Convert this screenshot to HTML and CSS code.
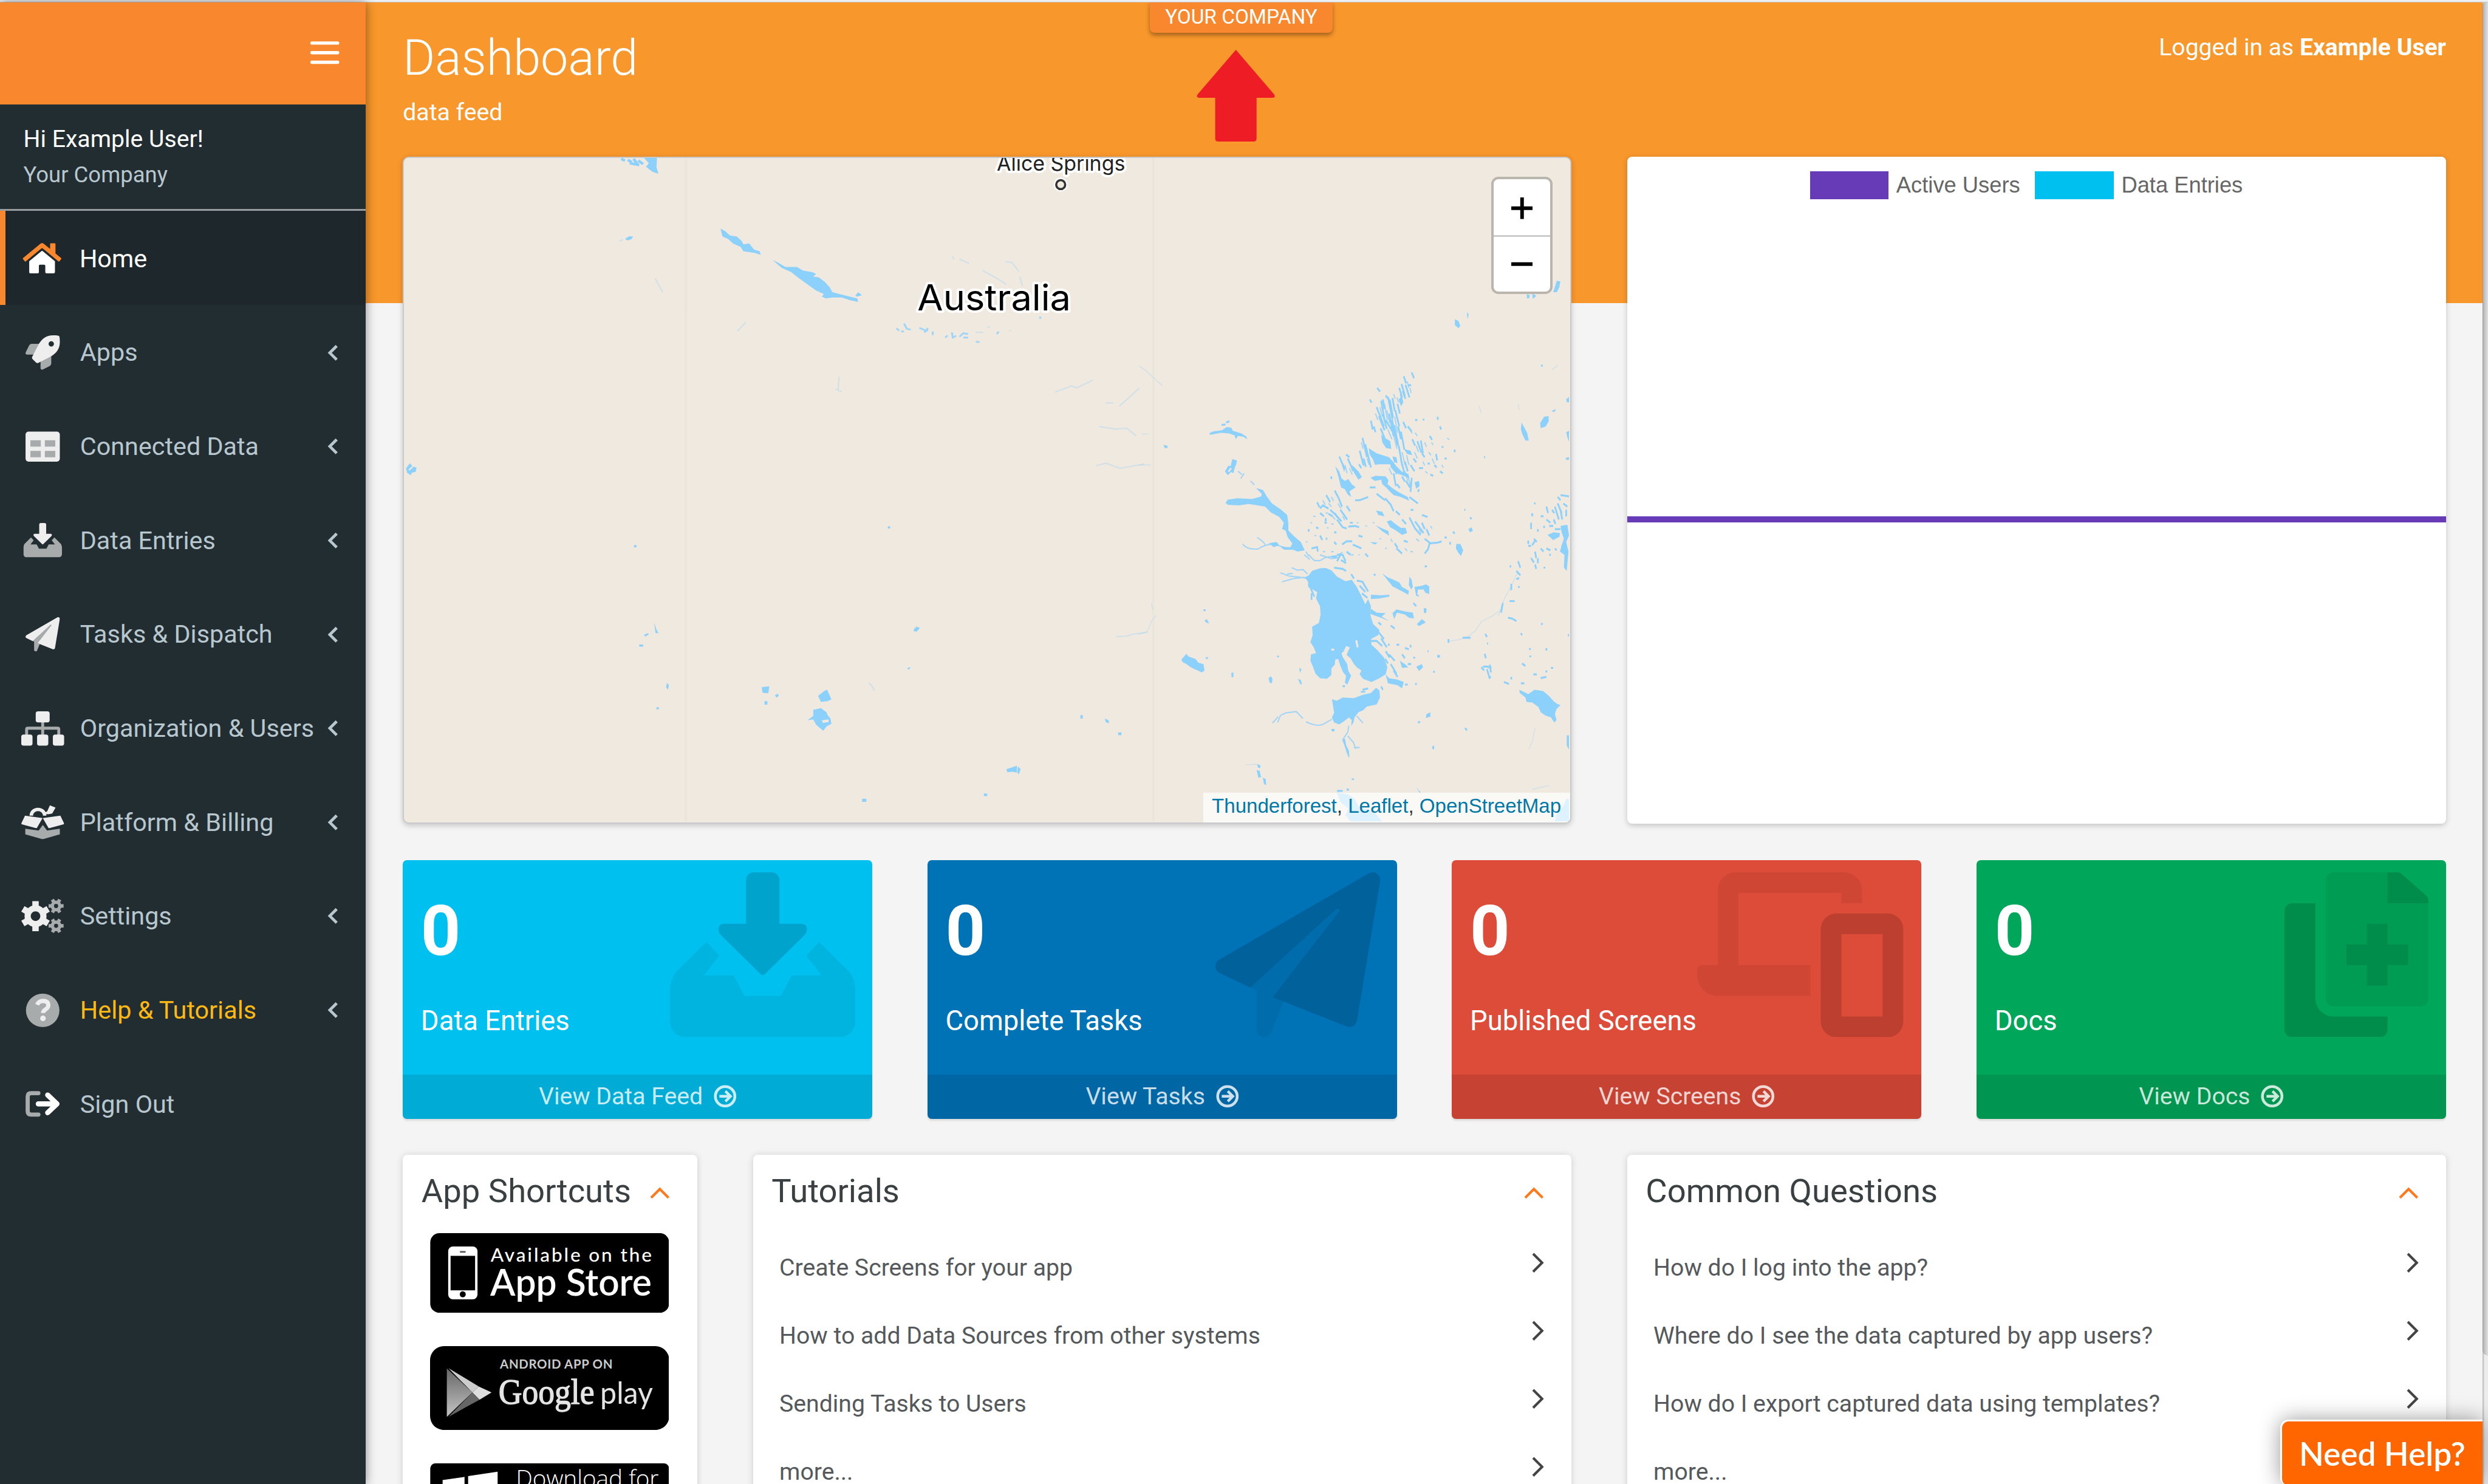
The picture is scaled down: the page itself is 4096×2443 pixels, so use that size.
FILE: index.html
```html
<!DOCTYPE html>
<html lang="en">
<head>
<meta charset="utf-8">
<title>Dashboard</title>
<link rel="stylesheet" href="styles.css">
</head>
<body>
<svg class="defs" aria-hidden="true">
  <symbol id="circle-right" viewBox="0 0 38 38"><circle cx="19" cy="19" r="16.3" fill="none" stroke="currentColor" stroke-width="4.6"/><path d="M9.500 19H27M19.500 10.500L28 19l-8.500 8.500" fill="none" stroke="currentColor" stroke-width="4.400"/></symbol>
  <symbol id="angle-left" viewBox="0 0 18 28"><path d="M15.500 2.500L4 14l11.500 11.500" fill="none" stroke="currentColor" stroke-width="4.800"/></symbol>
  <symbol id="angle-right" viewBox="0 0 20 34"><path d="M2 2l15 15L2 32" fill="none" stroke="currentColor" stroke-width="4.200"/></symbol>
  <symbol id="angle-up" viewBox="0 0 33 20"><path d="M2 18L16.500 3.500 31 18" fill="none" stroke="currentColor" stroke-width="4.200"/></symbol>
  <symbol id="inbox-in" viewBox="0 0 576 512"><path class="lo" d="M113 216L153 259L105 320H198L232 384H344L378 320H471L423 259L463 216L560 312Q576 338 576 364V464a48 48 0 0 1-48 48H48a48 48 0 0 1-48-48V364Q0 338 16 312Z"/><path class="hi" d="M167 160H236V24a24 24 0 0 1 24-24h56a24 24 0 0 1 24 24v136h69c17.800 0 21 21 10 34L296 315c-5 5-11 5-16 0L157 194c-11-13-8-34 10-34z"/></symbol>
  <symbol id="plane" viewBox="0 0 512 512"><path class="lo" d="M108 358L375 113.700C382 107 390 115 384 122L178 388L212 401L170.500 503.300c-14 17.100-42.500 7.800-42.500-15.800V366z"/><path class="hi" d="M511.600 28l-72 432a24 24 0 0 1-33 18.200L178 388 384 122c4.700-5.700-1-12-8.600-8.300L108 358 14.700 313.800a24 24 0 0 1-2.200-43.200L476 3.200c17.300-10 39 4.600 35.600 24.800z"/></symbol>
</svg>
<div class="app">
  <div class="strip"></div>
  <aside class="sidebar">
    <div class="logo"><svg class="burger" viewBox="0 0 48 40"><path d="M2.500 4H45.500M2.500 20H45.500M2.500 36H45.500" stroke="#fff" stroke-width="5.400" stroke-linecap="round"/></svg></div>
    <div class="user"><div class="user-name">Hi Example User!</div><div class="user-org">Your Company</div></div>
    <nav class="menu">
      <a class="item active"><svg class="ico" viewBox="-32 0 640 512"><path fill="#fff" d="M280.400 148.300L96 300.100V464a16 16 0 0 0 16 16H224a16 16 0 0 0 16-16V368a16 16 0 0 1 16-16h64a16 16 0 0 1 16 16v95.600a16 16 0 0 0 16 16H464a16 16 0 0 0 16-16V300L295.700 148.300a12.200 12.200 0 0 0-15.300 0z"/><path fill="#f9872d" d="M571.600 251.500L488 182.600V44a12 12 0 0 0-12-12h-56a12 12 0 0 0-12 12v72.600L318.500 43a48 48 0 0 0-61 0L4.300 251.500a12 12 0 0 0-1.600 16.900l25.500 31A12 12 0 0 0 45.200 301l235.200-193.700a12.200 12.200 0 0 1 15.300 0L530.900 301a12 12 0 0 0 16.900-1.600l25.500-31a12 12 0 0 0-1.700-16.900z"/></svg><span>Home</span></a>
      <a class="item"><svg class="ico" viewBox="-64 0 640 512"><g class="lo"><path d="M199 128H94.800c-16.300 0-35.500 11.900-42.900 26.500L2.500 253.300A28 28 0 0 0 0 264a24 24 0 0 0 24 24H140z"/><path d="M384 312.800V417.200c0 16.300-11.900 35.500-26.500 42.800l-98.800 49.400A28 28 0 0 1 248 512a24 24 0 0 1-24-24V372z"/></g><path class="hi" fill-rule="evenodd" d="M505.100 19.100C504 13.600 498.500 8.100 492.900 6.900 460.700 0 435.500 0 410.400 0 307.200 0 245.300 55.200 199 128L105.300 310.500c-11.400 11.400-13 32.300 0 45.200L156.200 406.600c11.200 11.200 32.200 13.200 45.300 0L384 312.800c72.600-46.300 128-108.400 128-211.100 0-25.200 0-50.400-6.900-82.600ZM384 168a40 40 0 1 1 40-40 40 40 0 0 1-40 40z"/></svg><span>Apps</span><svg class="ang"><use href="#angle-left"/></svg></a>
      <a class="item"><svg class="ico" viewBox="-64 0 640 512"><rect class="hi" y="32" width="512" height="448" rx="44"/><path class="lo" d="M72 160H228V256H72zM288 160H444V256H288zM72 320H228V416H72zM288 320H444V416H288z"/></svg><span>Connected Data</span><svg class="ang"><use href="#angle-left"/></svg></a>
      <a class="item"><svg class="ico" viewBox="-32 0 640 512"><use href="#inbox-in" width="576" height="512"/></svg><span>Data Entries</span><svg class="ang"><use href="#angle-left"/></svg></a>
      <a class="item"><svg class="ico" viewBox="-64 0 640 512"><use href="#plane" width="512" height="512"/></svg><span>Tasks &amp; Dispatch</span><svg class="ang"><use href="#angle-left"/></svg></a>
      <a class="item"><svg class="ico" viewBox="0 0 640 512"><path d="M80 360V270Q80 252 98 252H542Q560 252 560 270V360M320 160V360" fill="none" stroke="#a8abac" stroke-width="44"/><g class="hi"><rect x="216" width="208" height="166" rx="34"/><rect y="346" width="168" height="166" rx="34"/><rect x="236" y="346" width="168" height="166" rx="34"/><rect x="472" y="346" width="168" height="166" rx="34"/></g></svg><span>Organization &amp; Users</span><svg class="ang"><use href="#angle-left"/></svg></a>
      <a class="item"><svg class="ico" viewBox="0 0 640 512"><path d="M150 160a100 92 0 0 1 200 0" fill="none" stroke="#eee" stroke-width="52"/><path class="hi" d="M428 6L512 40L462 130L400 140L330 130L388 96z"/><path class="lo" d="M60 356L260 384L322 300L384 384L576 356V440L340 508Q320 514 300 508L60 440Z"/><path class="hi" d="M56 160L318 198L236 340Q230 350 218 347L8 290Q-4 284 4 270zM584 160L322 198L404 340Q410 350 422 347L632 290Q644 284 636 270z"/></svg><span>Platform &amp; Billing</span><svg class="ang"><use href="#angle-left"/></svg></a>
      <a class="item"><svg class="ico" viewBox="0 0 640 512"><g fill="none" stroke="#eee"><circle cx="213" cy="256" r="118" stroke-width="92"/><path d="M213 110V32M213 402V480M86 183L24 147M340 183L402 147M86 329L24 365M340 329L402 365" stroke-width="96" stroke-linejoin="round"/></g><g fill="none" stroke="#a8abac"><circle cx="520" cy="104" r="56" stroke-width="50"/><path d="M450 104H408M590 104H632M485 43L465 8M555 43L575 8M485 165L465 200M555 165L575 200" stroke-width="52"/><circle cx="520" cy="400" r="56" stroke-width="50"/><path d="M450 400H408M590 400H632M485 339L465 304M555 339L575 304M485 461L465 496M555 461L575 496" stroke-width="52"/></g></svg><span>Settings</span><svg class="ang"><use href="#angle-left"/></svg></a>
      <a class="item help"><svg class="ico" viewBox="-64 0 640 512"><circle class="lo" cx="256" cy="256" r="250"/><path d="M172 172Q200 116 262 116Q340 118 340 182Q340 216 300 242Q262 262 260 296" fill="none" stroke="#eee" stroke-width="62" stroke-linecap="butt"/><circle cx="260" cy="376" r="42" fill="#eee"/></svg><span>Help &amp; Tutorials</span><svg class="ang"><use href="#angle-left"/></svg></a>
      <a class="item"><svg class="ico" viewBox="-64 0 640 512"><path d="M192 96H84Q32 96 32 148V364Q32 416 84 416H192" fill="none" stroke="#a8abac" stroke-width="62" stroke-linecap="round"/><path d="M190 256H440M330 124L470 256L330 388" fill="none" stroke="#fff" stroke-width="76" stroke-linecap="round" stroke-linejoin="round"/></svg><span>Sign Out</span></a>
    </nav>
  </aside>
  <main class="main">
    <div class="tag">YOUR COMPANY</div>
    <svg class="arrow" viewBox="0 0 133 156"><path d="M66.500 2L130 76Q134 82 127 82H101V150Q101 155 96 155H37Q32 155 32 150V82H6Q-1 82 3 76Z" fill="#ee1c25"/></svg>
    <header class="head"><div><h1>Dashboard</h1><p class="sub">data feed</p></div><p class="login">Logged in as <b>Example User</b></p></header>
    <section class="top">
      <div class="map">
        <svg class="map-art" viewBox="674 263 1943 1107">
          <path d="M1144 263V1370M1924 263V1370" stroke="#e8e5dd" stroke-width="3"/>
          <g class="water" transform="translate(660 250) scale(.79719 .72704)">
            <path d="M520 18H547L546 40L550 54L538 50L524 38L530 30z"/><path d="M472 20l8 4M486 22l8 6M498 20l8 12M508 24l10 8M490 30l20 4" class="st"/>
            <path d="M680 180L690 186L700 196L714 198L724 208L728 216L740 214L750 228L762 232L764 240L752 236L740 234L728 232L722 222L706 214L696 204L684 198z"/>
            <path d="M789 252L800 258L816 268L840 268L852 276L872 280L880 284L874 290L886 292L898 302L908 314L914 326L936 332L966 340L968 348L950 344L934 338L914 338L900 340L892 336L896 330L880 322L862 308L842 292L828 280L808 270z"/>
            <path d="M962 334L968 326L976 333L966 336zM480 204L488 198L497 198L494 204L486 207z"/>
            <path d="M1048 409l6 5M1064 398l6 12 8 2M1058 416h6M1096 408l14 6 4-6M1106 418l8-6M1124 416v8M1150 430l5-5M1164 418l2 12 7-4M1180 428l8-8 10 2M1188 430h10M1214 440h8M1258 422l4-6M1349 382v5" class="st thin"/>
            <path d="M468 209l8-4M543 294l8 16 8 16M1214 418h16M1238 406h6M1284 414h4M1165 243l4 8M1180 250l20 10M1228 276l30 18 20 14M1276 256l14 2 14 20M1306 290l6 22M1380 555l34-14 12 4 34-18M1486 580h16M1514 588l18-18 24-24M1472 634l34 6 24-2 20 18M1466 724l20-6 30 12 50-10M1508 1116l22-1 14-5 30-4M928 520l-2 30M920 548l14 6M715 415l18-20" class="st fa"/>
            <path d="M22 730L30 718L36 726L44 728L42 738L34 740L32 746L24 740z"/><path d="M28 734l8-8" stroke="#f0e9df" stroke-width="3"/>
            <path d="M541 1084L546 1100L550 1108L544 1108zM520 1112l8-4 2 3-8 5zM510 1134h8v5h-8zM568 1222l4 6-2 10-4-6zM1084 1100L1090 1093L1097 1096L1091 1104L1085 1104zM1030 863h5v5h-5zM499 906h5v5h-5zM546 1278h5v5h-5z"/>
            <path d="M766 1232L782 1230L780 1246L768 1245zM772 1264h6v8h-6zM794 1250l6-3 2 5-5 4zM884 1252L898 1240L903 1238L912 1260L904 1264L890 1266z"/>
            <path d="M874 1284L890 1280L902 1290L904 1296L910 1304L912 1316L902 1322L895 1332L886 1324L880 1318L874 1306L862 1308L874 1298z"/><path d="M892 1308l14-2v6l-12 2z" fill="#f0e9df"/>
            <path d="M1278 1420L1290 1416L1300 1412L1300 1428L1290 1426L1280 1427zM1302 1414l6 6-4 12-3-4zM1484 1304L1492 1308L1493 1315L1486 1312zM1512 1336h7v6h-7zM1433 1296h5v8h-5zM1231 1476h7v6h-7zM976 1488h9v7h-9zM1070 1188l8-2-4 6z"/><path d="M990 1222l6 6 6 12" class="st fa"/>
          </g>
          <path class="water" d="M2597 468l6 1-2 10-4 8-6 0zM2547 490l5 2-1 5-4 0zM2556 489l7 4-6 5zM2427 532l6 3 3 8-3 4-6-5zM2447 520l3 4-2 8z"/>
          <g class="water" transform="translate(1900 550) scale(.47194 .53571)">
            <path d="M0 112l24 14 34 28 26 20M10 324h24M0 420h42M0 948l30-10 16-34 16-16M44 850l4 20M1090 970l40-6 30-8 30-20 20-28 40-18 24-16M1270 890l20-50 30-50 20-40M1400 1240l-10 40-12 26M1390 1430l60-12M1202 236l8 22M1480 110l-20 14M376 1354l40-2 10 4M1340 230l4 20" class="st fa"/>
            <path d="M248 322L262 316L294 312L310 302L326 304L332 314L362 322L380 332L382 340L368 332L350 330L342 340L338 328L318 322L290 320L252 326z"/><path d="M292 296l14-2M308 288l12-4" class="st"/>
            <path d="M304 440L316 422L324 424L330 402L346 406L344 418L338 430L334 446L326 442L314 452zM86 358L100 360L102 367L92 368z"/><path d="M316 442l10-12" stroke="#f0e9df" stroke-width="5"/>
            <path d="M350 440l14 10M360 462l12-16M394 470l14 12" class="st thin"/>
            <path d="M414 492L438 498L452 518L470 540L500 558L524 576L528 602L528 624L548 642L572 660L586 686L560 690L534 680L542 664L526 646L518 624L506 620L512 600L496 582L466 568L446 550L420 546L388 542L352 546L314 544L306 538L314 528L346 524L400 526L432 518L434 510z"/>
            <path d="M366 666Q380 684 420 682Q444 668 476 666Q500 674 540 682M418 646q20 10 30 24" class="st thin"/><path d="M460 664l26-4 10 10-20 6zM500 676l44 0 10 8-40 0z"/>
            <path d="M584 700l20 14M600 700l20 18h20l20-10 40-6 20-10M590 690l10 14M500 756l30 10 40 4 30 4M506 784l40-10 40-4M540 740l20 8 20-2 16 14M524 760l20-2M640 700l40 12 30-4" class="st thin"/>
            <path d="M586 770L600 764L612 750L640 742L660 741L680 748L700 768L730 782L752 778L770 800L786 828L800 854L810 838L820 860L818 888L828 916L850 934L846 950L820 962L822 980L842 996L866 1020L878 1050L872 1072L850 1084L822 1096L792 1086L780 1072L786 1060L770 1050L760 1040L748 1022L734 1012L740 998L746 988L732 984L724 1000L716 1006L720 1018L736 1040L740 1062L750 1076L736 1104L728 1098L732 1076L722 1066L712 1046L704 1024L694 1026L692 1042L680 1054L680 1074L664 1086L640 1084L624 1070L614 1046L606 1030L608 1010L626 1006L618 988L606 972L614 950L612 924L636 912L642 886L640 860L626 836L630 816L610 806L598 800L598 784z"/>
            <path d="M768 966l5 22" stroke="#f0e9df" stroke-width="7"/><path d="M680 995h10" stroke="#f0e9df" stroke-width="6"/>
            <path d="M682 1150L700 1154L720 1144L760 1146L790 1136L820 1130L838 1114L850 1122L852 1144L840 1166L806 1172L792 1184L776 1190L762 1206L758 1222L750 1232L752 1214L742 1206L722 1220L708 1228L690 1222L682 1206L690 1192z"/>
            <path d="M472 1224l20-20M490 1222l10-22 20-8 36-4 24 22M590 1220q40 16 60 8l32-16M742 1232l-4 20-18 24 16 30 6 24M738 1264l20 20 8 20M760 1300h20M770 1202l22 22" class="st thin"/><path d="M720 1276l8-4 4 20 10 18 2 18-8-8zM680 1242l12 0-2 8-8 0z"/>
            <path d="M150 1026L168 1008L174 1016L200 1024L210 1036L228 1040L232 1060L222 1066L208 1060L196 1056L180 1048L168 1040L154 1034zM234 1020l12-2-6 8zM232 904l8-4 8 14-12-4zM326 1068l8-2v14l-6 2zM458 1084l8-6 6 8-2 14-8-2zM566 1052l8 4-4 12zM562 1086l10 4 4 14-6-2zM488 1014h7v5h-7zM228 870h8v5h-8z"/>
            <path d="M418 1352l12 4-2 8-8-2zM416 1370l10 2 6 20-10 2zM438 1394l10 4 2 18-8-2zM752 1396h8v5h-8zM700 1432h20v6h-20zM734 1428h8v6h-8zM446 1450h8v5h-8z"/>
            <path d="M700 1440L740 1446L764 1462L776 1484L830 1500L862 1532H750L730 1510L740 1490L712 1470z"/><path d="M980 1424l14 14 2 8z"/>
            <!-- channel country -->
            <path d="M812 368L840 384L884 396L898 410L910 424L928 440L952 448L956 462L930 452L908 446L890 428L888 418L850 418L834 420L828 404L816 388z"/>
            <path d="M818 460L836 454L872 456L882 468L878 480L896 492L916 504L950 520L956 532L926 520L900 514L884 500L876 492L860 480L856 466L834 470z"/>
            <path d="M694 424L708 440L716 462L728 470L740 464L752 480L766 490L744 502L750 520L738 512L728 496L714 490L706 460zM752 420L776 440L788 458L776 466L760 444z"/>
            <path d="M856 326L870 336L888 346L892 370L874 368L860 350zM936 370L960 376L966 390L948 386zM896 394L910 396L914 414L902 412zM974 474L990 470L992 486L980 494zM918 216l12-10 4 20-8 12z"/>
            <path d="M876 596L890 592L906 604L926 616L942 616L948 632L930 638L908 624L888 614zM838 562L860 566L868 580L846 576zM836 608L860 618L882 626L884 640L862 628zM816 660l28 2-10 6z"/>
            <path d="M860 758L880 770L920 786L930 800L954 812L952 824L926 812L896 798zM956 768l8 10 4 22-6 8-8-14zM974 800L1000 796L1014 792L1026 798L1026 822L1012 818L1006 808L986 808L984 822L992 830L980 828z"/>
            <path d="M820 824L856 826L884 824L886 830L850 836L820 838zM820 868L840 880L872 882L858 892L884 906L850 894L818 884zM896 882L910 870L940 876L968 880L972 898L954 896L940 886L912 880L902 900zM982 916L1000 900L1014 910L990 922zM1006 866l10 0 0 14-8 2z"/>
            <path d="M872 1072L884 1084L912 1088L936 1096L930 1116L914 1106L880 1100zM922 1030L940 1040L952 1050L930 1052zM980 1048l20-8 4 10-14 12zM848 1100l20-8M1054 1012h10v8h-10zM784 1124h16v5h-16z"/>
            <path d="M842 180l10 12M964 132l8 18M936 144l8 22M928 168l12 36M942 170l14 40M920 180l10 30M932 190l10 24M952 172h10M856 220l12 60M862 216l6 30M880 208l16 70M886 216l12 56M896 212l8 40M872 204l12 14M840 240l26 60M848 268l20 44M862 262l14 46M872 280l24 36M884 260l16 70M894 280l20 80M902 296l14 60M906 250l14 50M914 230l8 30M926 316l12 56M918 360l12 60M916 300l10 40M816 216l6 10M820 282l6 28M830 300l6 18M854 306l14 30M790 336l16 60M800 356l20 72M780 376l14 46M794 400l8 26M708 394l20 40M738 400l20 40M732 388l12 8M778 418l8 12M950 300l14 16M934 286l10 20M966 340l10 20M984 346l14 36M996 344l8 40M1000 384l10 12M970 400l10 12M960 420l14 20M940 410l10 30M926 404l12 40M990 430h14M964 460l-4 44M944 470l14 20M930 456l10 16M900 446l8 40M912 480l10 12M1006 276l0 6M1028 330l8 12M1056 270v10M1050 386l4 20M1044 420l8 8M1064 440l10 6M1030 450l10 4M1080 400h8M1116 372v8M1070 364h6M1020 416h8M990 496l-4 8M976 280h8M1064 300l4 10" class="st"/>
            <path d="M948 160l6 20M958 180l4 16M924 200l4 16M868 230l10 50M876 250l10 40M852 240l8 30M888 240l12 60M904 270l10 50M880 310l14 30M898 320l14 50M910 330l10 40M930 380l10 40M946 390l8 30M900 420l10 30M884 430l10 20M940 440l10 30M950 450l10 40M974 380l10 20M980 360l8 20M1010 350l6 14M1024 380l8 10M1036 400l8 16M1004 410l6 12M1012 440l8 6M1034 350l6 8M976 320l8 10M960 312l6 10M1090 336l6 6M1070 420l6 8M900 200l6 14M912 210l6 16M836 260l8 20M716 410l10 30M728 420l8 26M744 430l10 20M764 440l10 14M720 470l12 24M786 350l6 20M806 400l8 20" class="st thin"/>
            <path d="M692 500l14 24 12 26M662 514l14 22M630 536l8 16M676 560l20 16 20 20M640 570l14 10M712 560l24 30M764 530h16M734 548l12 16M700 590l20 24 14 4M740 612l24-2 14 4M656 600h8M626 614l8 4M600 620v8M640 640l8 14M610 680l20-4 2 14M718 668l16-10 20 0M756 668l30 12M776 640l14 4M800 696l10 10M700 700l20 0 10 20M714 716l18 10M734 690l14 10M690 660l8 8M660 650h6M690 630h8M870 524l20 20 10 20M908 564l14 12M930 590l14 14M956 584l20 34 20 20M976 596l30 36M1000 600l10 20M1016 620l10 20M1010 650l20 14 26-2 14-4M1028 662l-6 20-12 14M904 664l10 14M910 680l20 16M936 656l14 4M960 560h10M956 520l30 20M816 490h20M780 530l30-10M840 510l30 20M1010 736h8M1100 660v8M1110 628l6 6M1080 646h8M680 456v8M1000 576l20 6" class="st"/>
            <path d="M650 530l8 14M670 540l10 10M684 580l10 10M660 570h8M720 580l8 12M680 520l8 12M704 540l10 16M616 580h8M606 600h6M620 640h6M664 616h6M680 604h8M770 600h6M800 610h6M826 600h6M890 650l6 10M850 650h6M870 680h6M940 680l8 8M960 690h8M980 650l10 8M990 620l8 12M1030 610l6 8M590 660h6M650 690h8M680 690h8M750 700h8M776 700h4" class="st thin"/>
            <path d="M640 556l10-10 20 10M670 572l14 8M692 570l10 14M746 600h10M660 586v10M690 740l30 4 12 6M680 706h20M700 720l12-20M750 760l10 14M770 780l20 4 20 30M780 796l20 20M788 820l20 14M830 760l6 4M846 940l20 22M856 960l20 28M872 1000l14 20M884 1010l20 20M890 1040l20 30M900 1060l14 20M870 1024l10 14M846 910l10 8M890 920l14 10M820 968h20l20 16M880 980h6M910 980h10M940 990l14 4M960 980v8M970 1020h6M950 1040h12M930 1010l10 12M940 1104h10M976 1102h6M970 850l10 10M856 1110l6 10M790 1120l20-4M1020 1000h4M1040 1064h6M610 820v20M600 790l20 40" class="st"/>
            <path d="M1122 666L1136 666L1146 686L1138 704L1128 692L1120 680zM1164 620l12-6 4 12-10 4zM1418 290L1432 270L1448 268L1448 284L1438 300L1420 306zM1458 252l16-6-6 10zM1352 288L1360 300L1372 320L1378 344L1366 344L1356 326L1350 310zM1248 176l12 14"/>
            <path d="M1510 216l10-8v18l-8-2zM1510 318l10-4v34l-6-14zM1508 398l12-2v8l-10 0zM1512 1262l8 0v44l-8-12zM1516 946h6v8h-6zM1444 638L1466 630L1488 632L1486 644L1464 654zM1490 610L1514 606L1520 640L1510 660L1518 690L1512 750L1502 740L1504 700L1488 690L1494 670L1502 650L1494 630z"/>
            <path d="M1480 520l10 10M1490 514l30 4M1480 540l14 30M1470 550l14 40M1490 560l6 30M1440 550l6 20M1460 560l8 10M1466 590l6 14M1440 590l14 10M1420 580h10M1390 570v10M1386 600v20M1396 650l10 10M1410 620v8M1376 672h10M1400 690l4 20M1420 680l10 10M1386 710l10 14M1410 710v16M1396 540h6M1440 680l14 6M1450 700h6M1470 680l6 6M1430 610l4 6M1510 560v20M1500 540l14 10M1390 670l10-14M1376 656v10M1450 610h14M1470 620h20M1400 730l4 14M1430 740h6" class="st"/>
            <path d="M1340 720l8 20M1334 750l14 14M1310 736h6M1316 790v20M1334 776l10-4M1310 844h18M1304 896l14 2 16 8M1340 800h6M1286 850l-6 30M1224 946l6 10M1144 958l28 0M1094 962v12M1350 944l4 6M1382 990v6M1440 990v8M1222 1008l4 14M1216 1048h14l16 4M1230 1056l10 30M1236 1080h8M1240 1042l4 24M1210 1050l10 10M1380 1016h6M1354 1038l12 8M1394 1072h12M1456 1052h8M1290 1096l18 6M1316 1080v8M1350 1100h12M1424 108v6M1424 912v6M1440 1060v6M1220 396h4M1420 1084l20-4M1170 584l6 4M1230 976h4M1150 560h4" class="st"/>
            <path d="M1344 1120L1358 1126L1376 1134L1398 1120L1428 1124L1450 1140L1466 1156L1478 1164L1490 1168L1476 1180L1470 1196L1476 1214L1468 1222L1456 1206L1436 1200L1420 1190L1412 1174L1390 1160L1370 1158L1366 1144L1346 1130z"/>
            <path d="M1016 1196l14-6 0 14-16 4zM986 1218h8v6h-8zM1150 1238l10 2 0 8-6-2zM1036 1298l6-6 2 12-6 2zM720 1106h8v6h-8z"/>
            <path d="M1480 1500Q1500 1490 1510 1460H1524V1532H1470Q1474 1510 1480 1500z"/>
          </g>
          <g class="lbl"><text x="1663" y="284.500" font-size="34" textLength="214" lengthAdjust="spacingAndGlyphs">Alice Springs</text><text x="1530.500" y="517" font-size="60" textLength="256" lengthAdjust="spacingAndGlyphs" fill="#000">Australia</text></g>
          <circle cx="1769.500" cy="307.500" r="7.500" fill="#fff" stroke="#fff" stroke-width="8"/><circle cx="1769.500" cy="307.500" r="7.500" fill="#f0e9df" stroke="#333" stroke-width="3.600"/>
        </svg>
        <div class="zoomer"><span><svg viewBox="0 0 36 36"><path d="M0 18H36M18 0V36" stroke="#000" stroke-width="6"/></svg></span><span><svg viewBox="0 0 36 36"><path d="M0 18H36" stroke="#000" stroke-width="6"/></svg></span></div>
        <div class="attr"><a>Thunderforest</a>, <a>Leaflet</a>, <a>OpenStreetMap</a></div>
      </div>
      <div class="chart">
        <div class="legend"><i class="sw users"></i><span>Active Users</span><i class="sw data"></i><span>Data Entries</span></div>
        <div class="line"></div>
      </div>
    </section>
    <section class="boxes">
      <div class="box cyan"><svg class="mark w576" viewBox="0 0 576 512"><use href="#inbox-in"/></svg><div class="num">0</div><div class="cap">Data Entries</div><a class="foot">View Data Feed<svg><use href="#circle-right"/></svg></a></div>
      <div class="box blue"><svg class="mark w512" viewBox="0 0 512 512"><use href="#plane"/></svg><div class="num">0</div><div class="cap">Complete Tasks</div><a class="foot">View Tasks<svg><use href="#circle-right"/></svg></a></div>
      <div class="box red"><svg class="mark w640" viewBox="0 0 640 512"><path class="lo" d="M128 288H352V384H64a64 64 0 0 1-64-64V304a16 16 0 0 1 16-16H64V56a56 56 0 0 1 56-56H456a56 56 0 0 1 56 56V96H448V64H128z"/><path class="hi" fill-rule="evenodd" d="M432 128H592a48 48 0 0 1 48 48V464a48 48 0 0 1-48 48H432a48 48 0 0 1-48-48V176a48 48 0 0 1 48-48zM448 192V448H576V192z"/></svg><div class="num">0</div><div class="cap">Published Screens</div><a class="foot">View Screens<svg><use href="#circle-right"/></svg></a></div>
      <div class="box green"><svg class="mark w448" viewBox="0 0 448 512"><path class="lo" d="M320 0V96H448V392a24 24 0 0 1-24 24H152a24 24 0 0 1-24-24V24a24 24 0 0 1 24-24zM256 160V224H192V288H256V352H320V288H384V224H320V160z"/><path class="hi" d="M96 96V392a56 56 0 0 0 56 56H320V488a24 24 0 0 1-24 24H24a24 24 0 0 1-24-24V120a24 24 0 0 1 24-24zM320 0H352L360 2L441 73Q448 80 448 96H320zM256 160V224H192V288H256V352H320V288H384V224H320V160z"/></svg><div class="num">0</div><div class="cap">Docs</div><a class="foot">View Docs<svg><use href="#circle-right"/></svg></a></div>
    </section>
    <section class="panels">
      <div class="panel">
        <h2><span>App Shortcuts</span><svg class="up"><use href="#angle-up"/></svg></h2>
        <div class="badges">
          <svg class="badge b1" viewBox="0 0 1198 400"><rect width="1198" height="400" rx="46"/><rect x="90" y="67" width="147" height="265" rx="24" fill="#fff"/><rect x="102" y="114" width="123" height="173"/><rect x="148" y="90" width="30" height="8" rx="4" fill="#555"/><circle cx="163" cy="307" r="15"/><g fill="#fff" font-family="Lato, sans-serif"><text x="303" y="143" font-size="96" font-weight="500" textLength="808">Available on the</text><text x="301" y="314" font-size="190" font-weight="600" textLength="810" lengthAdjust="spacingAndGlyphs">App Store</text></g></svg>
          <svg class="badge b2" viewBox="0 0 1198 420"><defs><linearGradient id="gp" x1="0" y1="0" x2="0" y2="1"><stop offset="0" stop-color="#666"/><stop offset="1" stop-color="#c4c4c4"/></linearGradient></defs><rect width="1198" height="420" rx="70"/><path d="M84 112L212 232L84 354z" fill="url(#gp)"/><path d="M92 110L244 202L212 232z" fill="#ccc"/><path d="M244 202L308 232L248 268L212 232z" fill="#ddd"/><path d="M212 232L248 268L92 354z" fill="#666"/><g fill="#e4e4e4"><text x="350" y="113" font-size="62" font-weight="700" fill="#ccc" font-family="Lato, sans-serif" textLength="564">ANDROID APP ON</text><text x="343" y="288" font-size="178" font-family="Liberation Serif, serif" stroke="#e4e4e4" stroke-width="4" textLength="480" lengthAdjust="spacingAndGlyphs">Google</text><text x="852" y="288" font-size="152" font-weight="400" font-family="Lato, sans-serif" textLength="264" lengthAdjust="spacingAndGlyphs">play</text></g></svg>
          <svg class="badge b3" viewBox="0 0 1198 400"><rect width="1198" height="400" rx="26"/><path d="M62 84L172 68V190H62zM190 64L338 42V190H190z" fill="#fff"/><text x="430" y="120" font-size="118" font-weight="300" fill="#fff" font-family="Open Sans, sans-serif" textLength="716" lengthAdjust="spacingAndGlyphs">Download for</text></svg>
        </div>
      </div>
      <div class="panel">
        <h2><span>Tutorials</span><svg class="up"><use href="#angle-up"/></svg></h2>
        <ul><li><span>Create Screens for your app</span><svg><use href="#angle-right"/></svg></li><li><span>How to add Data Sources from other systems</span><svg><use href="#angle-right"/></svg></li><li><span>Sending Tasks to Users</span><svg><use href="#angle-right"/></svg></li><li><span>more...</span><svg><use href="#angle-right"/></svg></li></ul>
      </div>
      <div class="panel">
        <h2><span>Common Questions</span><svg class="up"><use href="#angle-up"/></svg></h2>
        <ul><li><span>How do I log into the app?</span><svg><use href="#angle-right"/></svg></li><li><span>Where do I see the data captured by app users?</span><svg><use href="#angle-right"/></svg></li><li><span>How do I export captured data using templates?</span><svg><use href="#angle-right"/></svg></li><li><span>more...</span><svg><use href="#angle-right"/></svg></li></ul>
      </div>
    </section>
  </main>
  <div class="scroll"><div class="thumb"></div></div>
  <div class="needhelp">Need Help?</div>
</div>
</body>
</html>
```
FILE: styles.css
```css
* { box-sizing: border-box; margin: 0; padding: 0; }
html, body { overflow: hidden; background: #f4f4f4; }
body { font-family: Roboto, sans-serif; font-size: 39.7px; }
.defs { position: absolute; width: 0; height: 0; }
.app { zoom: .98699; position: relative; width: 4150px; height: 2476px; overflow: hidden; display: grid; grid-template: 4px 1fr / 610px 1fr 9px; }
.strip { grid-column: 1 / -1; background: linear-gradient(#eef1f4 60%, #b9b4ae); }

/* two-tone icons */
.hi { fill: var(--hi); }
.lo { fill: var(--lo); }

/* sidebar */
.sidebar { --hi: #eee; --lo: #a8abac; background: #222d32; box-shadow: 0 0 16px rgba(0,0,0,.45); z-index: 2; }
.logo { height: 170px; background: #f9872d; display: flex; justify-content: flex-end; padding: 64px 44px 0 0; }
.burger { width: 48px; height: 40px; }
.user { height: 178px; padding: 30px 0 0 39px; border-bottom: 4px solid #9a9d9e; line-height: 58px; color: #fff; }
.user-name { font-size: 39.7px; }
.user-org { font-size: 37px; color: #b8c7ce; }
.item { height: 156.7px; display: flex; align-items: center; padding: 2px 46px 0 35px; font-size: 41.9px; color: #b8c7ce; white-space: nowrap; }
.item.active { background: #1e282c; color: #fff; border-left: 10px solid #f9872d; padding-left: 25px; }
.item.help { color: #fdb813; }
.item span { margin-left: 27px; }
.ico { width: 71.5px; height: 57.2px; overflow: visible; flex: none; }
.ang { width: 18px; height: 28px; margin-left: auto; color: #b8c7ce; }

/* main column */
.main { position: relative; padding: 0 61px 0 62px; background: linear-gradient(#f8972b 0 502px, #f4f4f4 502px); min-width: 0; height: 2472px; overflow: hidden; }
.tag { position: absolute; left: 1308px; top: 0; width: 305px; height: 51px; border-radius: 0 0 8px 8px; background: #f9872d; box-shadow: 0 4px 8px rgba(0,0,0,.35); color: #fff; font-size: 33.8px; line-height: 48px; text-align: center; }
.arrow { position: absolute; left: 1385px; top: 76px; width: 133px; height: 158px; }
.head { height: 257px; display: flex; justify-content: space-between; color: #fff; padding-top: 33px; }
h1 { font-weight: 300; font-size: 82px; line-height: 120px; }
.sub { line-height: 58px; padding-top: 2px; }
.login { line-height: 58px; padding-top: 14px; font-size: 39.6px; }
.login b { font-weight: 700; }
.top { display: grid; grid-template-columns: 1949px 1366px; justify-content: space-between; height: 1113px; }
.map { position: relative; background: #f0e9df; border: 3px solid #c9c9cb; border-radius: 10px; overflow: hidden; box-shadow: 0 3px 10px rgba(0,0,0,.2); }
.map-art { display: block; width: 1943px; height: 1107px; }
.water { fill: #8cd0fc; }
.st { fill: none; stroke: #8cd0fc; stroke-width: 6; }
.thin { stroke-width: 4; opacity: .8; }
.fa { stroke-width: 3; opacity: .3; }
.lbl { font-family: Inter, sans-serif; fill: #222; paint-order: stroke; stroke: #fff; stroke-width: 8px; stroke-linejoin: round; }
.zoomer { position: absolute; right: 29px; top: 32px; width: 103px; height: 195px; border: 5px solid #bab5ad; border-radius: 12px; background: #fff; display: flex; flex-direction: column; overflow: hidden; }
.zoomer span { flex: 1; display: flex; align-items: center; justify-content: center; padding-top: 3px; }
.zoomer span + span { border-top: 4px solid #ccc; padding-top: 0; }
.zoomer svg { width: 36px; height: 36px; }
.attr { position: absolute; right: 0; bottom: 0; height: 50px; padding: 0 15px 0 14px; background: rgba(255,255,255,.7); font: 33.5px/44px "Liberation Sans", sans-serif; color: #333; white-space: nowrap; }
.attr a { color: #0078a8; }
.chart { background: #fff; border-radius: 8px; box-shadow: 0 3px 10px rgba(0,0,0,.2); padding-top: 25px; }
.legend { display: flex; align-items: center; padding-left: 305px; height: 46px; font: 36.8px/46px "Liberation Sans", sans-serif; color: #666; }
.legend span { margin: 0 25px 0 13px; white-space: nowrap; }
.sw { width: 131px; height: 46px; }
.users { background: #673ab7; }
.data { background: #00c0ef; }
.line { margin-top: 529px; height: 10px; background: #673ab7; }

/* counters */
.boxes { margin-top: 61px; display: grid; grid-template-columns: repeat(4, 1fr); gap: 92px; }
.box { --hi: rgba(0,0,0,.15); --lo: rgba(0,0,0,.06); position: relative; height: 431px; border-radius: 7px; overflow: hidden; color: #fff; display: flex; flex-direction: column; padding-top: 58px; box-shadow: 0 3px 3px rgba(0,0,0,.1); }
.cyan { background: #00c0ef; } .blue { background: #0073b7; } .red { background: #dd4b39; } .green { background: #00a65a; }
.mark { position: absolute; top: 20px; right: 28px; height: 275px; }
.w576 { width: 309.400px; } .w512 { width: 275px; } .w640 { width: 343.800px; right: 30px; } .w448 { width: 240.600px; right: 29px; }
.num { font-weight: 700; font-size: 116px; line-height: 120px; padding-left: 30px; }
.cap { font-size: 46px; line-height: 60px; padding-left: 30px; margin-top: 60px; }
.foot { margin-top: auto; height: 74px; background: rgba(0,0,0,.1); color: rgba(255,255,255,.8); display: flex; align-items: center; justify-content: center; gap: 18px; }
.foot svg { width: 38px; height: 38px; }

/* panels */
.panels { margin-top: 60px; display: grid; grid-template-columns: 491px 1365px 1366px; justify-content: space-between; }
.panel { height: 620px; background: #fff; border-radius: 8px 8px 0 0; box-shadow: 0 2px 12px rgba(0,0,0,.16); }
h2 { display: flex; justify-content: space-between; align-items: center; height: 120px; padding: 0 46px 0 31px; font-size: 55.1px; font-weight: 400; color: #3a3f42; white-space: nowrap; }
.up { width: 33px; height: 20px; margin-top: 7px; color: #ff7a1c; }
ul { list-style: none; padding: 12px 46px 0 44px; }
li { display: flex; justify-content: space-between; align-items: center; height: 113.500px; color: #55595c; }
li svg { width: 20px; height: 34px; margin-top: -18px; color: #444; }
.badges { display: flex; flex-direction: column; padding: 11px 0 0 45px; }
.badge { width: 399px; flex: none; }
.b1 { height: 133px; } .b2 { height: 140px; margin-top: 55px; } .b3 { height: 133px; margin-top: 56px; }

.scroll { background: #ececec; box-shadow: inset 2px 0 2px #bbb; }
.thumb { height: 2256px; border-left: 2px solid #999; border-radius: 8px 0 0 12px; background: linear-gradient(90deg, #b5b5b5, #e0e0e0); }
.needhelp { position: absolute; z-index: 3; right: 9px; bottom: 0; width: 338px; height: 108px; background: #ff6600; border: solid #fff; border-width: 4px 0 0 4px; border-radius: 14px 0 0 10px; box-shadow: 0 0 36px rgba(0,0,0,.4); color: #fff; font: 600 54px/106px Lato, sans-serif; text-align: center; }
```
